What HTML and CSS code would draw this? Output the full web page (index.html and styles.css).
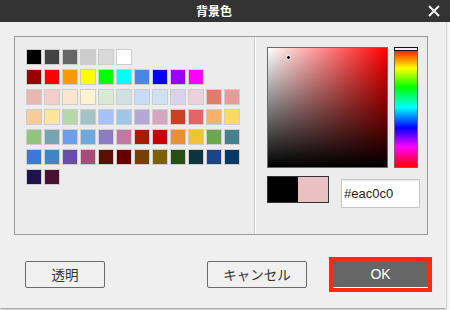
FILE: index.html
```html
<!DOCTYPE html>
<html lang="ja">
<head>
<meta charset="utf-8">
<title>背景色</title>
<link rel="stylesheet" href="styles.css">
</head>
<body>
<div class="dialog">
  <div class="titlebar">
    <div class="title">背景色</div>
    <button class="close" aria-label="閉じる">
      <svg width="12" height="12" viewBox="0 0 12 12"><path d="M1 1 L11 11 M11 1 L1 11" stroke="#f2f2f2" stroke-width="2" fill="none"/></svg>
    </button>
  </div>
  <div class="body">
    <div class="panel">
      <div class="palette">
        <div class="row">
          <span class="sw" style="background:#000000"></span><span class="sw" style="background:#434343"></span><span class="sw" style="background:#666666"></span><span class="sw" style="background:#cccccc"></span><span class="sw" style="background:#d9d9d9"></span><span class="sw" style="background:#ffffff"></span>
        </div>
        <div class="row">
          <span class="sw" style="background:#980000"></span><span class="sw" style="background:#ff0000"></span><span class="sw" style="background:#ff9900"></span><span class="sw" style="background:#ffff00"></span><span class="sw" style="background:#00ff00"></span><span class="sw" style="background:#00ffff"></span><span class="sw" style="background:#4a86e8"></span><span class="sw" style="background:#0000ff"></span><span class="sw" style="background:#9900ff"></span><span class="sw" style="background:#ff00ff"></span>
        </div>
        <div class="row">
          <span class="sw" style="background:#e6b8af"></span><span class="sw" style="background:#f4cccc"></span><span class="sw" style="background:#fce5cd"></span><span class="sw" style="background:#fff2cc"></span><span class="sw" style="background:#d9ead3"></span><span class="sw" style="background:#d0e0e3"></span><span class="sw" style="background:#c9daf8"></span><span class="sw" style="background:#cfe2f3"></span><span class="sw" style="background:#d9d2e9"></span><span class="sw" style="background:#ead1dc"></span><span class="sw" style="background:#dd7e6b"></span><span class="sw" style="background:#ea9999"></span>
        </div>
        <div class="row">
          <span class="sw" style="background:#f9cb9c"></span><span class="sw" style="background:#ffe599"></span><span class="sw" style="background:#b6d7a8"></span><span class="sw" style="background:#a2c4c9"></span><span class="sw" style="background:#a4c2f4"></span><span class="sw" style="background:#9fc5e8"></span><span class="sw" style="background:#b4a7d6"></span><span class="sw" style="background:#d5a6bd"></span><span class="sw" style="background:#cc4125"></span><span class="sw" style="background:#e06666"></span><span class="sw" style="background:#f6b26b"></span><span class="sw" style="background:#ffd966"></span>
        </div>
        <div class="row">
          <span class="sw" style="background:#93c47d"></span><span class="sw" style="background:#76a5af"></span><span class="sw" style="background:#6d9eeb"></span><span class="sw" style="background:#6fa8dc"></span><span class="sw" style="background:#8e7cc3"></span><span class="sw" style="background:#c27ba0"></span><span class="sw" style="background:#a61c00"></span><span class="sw" style="background:#cc0000"></span><span class="sw" style="background:#e69138"></span><span class="sw" style="background:#f1c232"></span><span class="sw" style="background:#6aa84f"></span><span class="sw" style="background:#45818e"></span>
        </div>
        <div class="row">
          <span class="sw" style="background:#3c78d8"></span><span class="sw" style="background:#3d85c6"></span><span class="sw" style="background:#674ea7"></span><span class="sw" style="background:#a64d79"></span><span class="sw" style="background:#5b0f00"></span><span class="sw" style="background:#660000"></span><span class="sw" style="background:#783f04"></span><span class="sw" style="background:#7f6000"></span><span class="sw" style="background:#274e13"></span><span class="sw" style="background:#0c343d"></span><span class="sw" style="background:#1c4587"></span><span class="sw" style="background:#073763"></span>
        </div>
        <div class="row">
          <span class="sw" style="background:#20124d"></span><span class="sw" style="background:#4c1130"></span>
        </div>
      </div>
      <div class="picker">
        <div class="pick-top">
          <div class="sv"><span class="sv-dot"></span></div>
          <div class="hue"><span class="hue-mark"></span></div>
        </div>
        <div class="pick-bottom">
          <div class="preview"><span class="prev-old"></span><span class="prev-new"></span></div>
          <input class="hex" type="text" value="#eac0c0">
        </div>
      </div>
    </div>
    <div class="actions">
      <button class="btn btn-clear">透明</button>
      <button class="btn btn-cancel">キャンセル</button>
      <button class="btn btn-ok">OK</button>
    </div>
  </div>
</div>
</body>
</html>
```
FILE: styles.css
```css
html, body {
  margin: 0;
  padding: 0;
}
body {
  background: #f7f7f7;
  font-family: "Noto Sans CJK JP", "Liberation Sans", sans-serif;
  width: 450px;
  height: 310px;
  overflow: hidden;
}
.dialog {
  width: 446px;
  height: 308px;
  background: #efefef;
  box-shadow: 0 1px 2px rgba(0,0,0,0.45);
  display: flex;
  flex-direction: column;
}
.titlebar {
  height: 22px;
  width: 450px;
  background: #333333;
  display: flex;
  align-items: center;
  flex-shrink: 0;
}
.title {
  flex: 1;
  text-align: center;
  color: #fff;
  font-size: 12px;
  font-weight: bold;
  line-height: 22px;
  padding-left: 0;
}
.close {
  width: 17px;
  height: 22px;
  padding: 0 0 1px 0;
  margin-right: 5px;
  border: 0;
  background: transparent;
  display: flex;
  align-items: center;
  justify-content: flex-start;
}
.close svg {
  display: block;
}
.body {
  flex: 1;
  display: flex;
  flex-direction: column;
  padding: 14px 18px 0 14px;
}
.panel {
  width: 412px;
  height: 197px;
  border: 1px solid #9a9a9a;
  background: #ececec;
  display: flex;
}
.palette {
  width: 228px;
  padding: 12px 0 0 11px;
  border-right: 1px solid #cfcfcf;
  display: flex;
  flex-direction: column;
  gap: 4px;
}
.row {
  display: flex;
  gap: 2px;
}
.sw {
  display: block;
  width: 14px;
  height: 14px;
  border: 1px solid #cdcdcd;
}
.picker {
  flex: 1;
  border-left: 1px solid #ffffff;
  padding: 10px 0 0 11px;
}
.pick-top {
  display: flex;
  gap: 6px;
}
.sv {
  position: relative;
  width: 119px;
  height: 119px;
  border: 1px solid #6a6a6a;
  background:
    linear-gradient(to top, #000 0%, rgba(0,0,0,0) 100%),
    linear-gradient(to right, #fff 0%, #ff0000 100%);
}
.sv-dot {
  position: absolute;
  left: 18px;
  top: 7px;
  width: 3px;
  height: 3px;
  border-radius: 50%;
  background: #000;
  border: 1px solid #fff;
}
.hue {
  position: relative;
  width: 22px;
  height: 119px;
  border: 1px solid #6a6a6a;
  background: linear-gradient(to bottom, #ff0000 0%, #ffff00 17%, #00ff00 33%, #00ffff 50%, #0000ff 67%, #ff00ff 83%, #ff0000 100%);
}
.hue-mark {
  position: absolute;
  left: -1px;
  top: -1px;
  width: 22px;
  height: 2px;
  border: 1px solid #111;
  background: #fbe9e9;
}
.pick-bottom {
  display: flex;
  align-items: flex-start;
  margin-top: 8px;
}
.preview {
  width: 60px;
  height: 25px;
  border: 1px solid #333;
  display: flex;
}
.prev-old {
  width: 30px;
  background: #000;
}
.prev-new {
  flex: 1;
  background: #eac0c0;
}
.hex {
  margin: 3px 0 0 12px;
  box-sizing: border-box;
  width: 79px;
  height: 29px;
  border: 1px solid #c6c6c6;
  box-shadow: inset 0 1px 1px rgba(0,0,0,0.08);
  background: #fff;
  padding: 0 0 0 2px;
  font-family: "Liberation Sans", sans-serif;
  font-size: 13px;
  color: #222;
  outline: none;
}
.actions {
  display: flex;
  align-items: center;
  margin-top: 26px;
  padding-left: 11px;
}
.btn {
  box-sizing: border-box;
  height: 27px;
  border: 1px solid #6b6b6b;
  border-radius: 2px;
  background: #f0f0f0;
  color: #333;
  font-family: "Noto Sans CJK JP", "Liberation Sans", sans-serif;
  font-size: 13.5px;
  padding: 0;
  line-height: 25px;
}
.btn-clear {
  width: 80px;
  margin-right: auto;
}
.btn-cancel {
  width: 100px;
  margin-right: 26px;
}
.btn-ok {
  width: 95px;
  background: #666666;
  border: 0;
  border-bottom: 1px solid #ffffff;
  border-radius: 0;
  color: #fff;
  font-family: "Liberation Sans", sans-serif;
  font-size: 14px;
  outline: 4px solid #ff2a0c;
  outline-offset: 0;
}
```
